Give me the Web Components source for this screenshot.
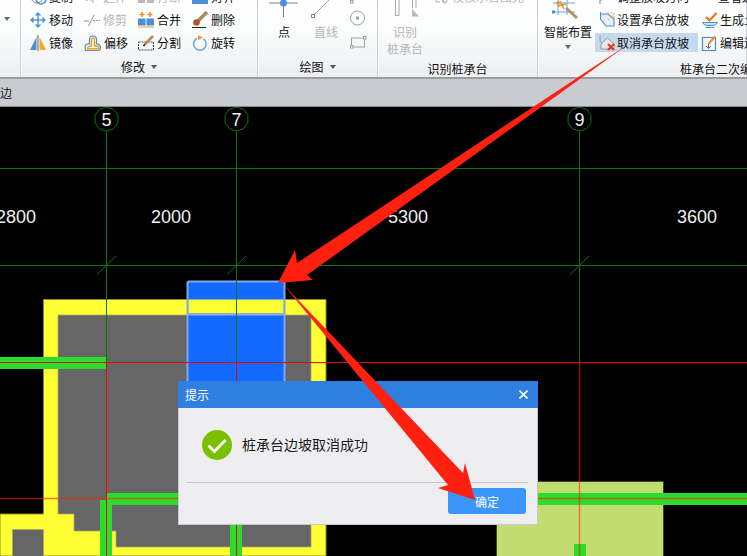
<!DOCTYPE html>
<html lang="zh-CN">
<head>
<meta charset="utf-8">
<title>桩承台</title>
<style>
html,body{margin:0;padding:0;background:#000}
body{font:12px "Noto Sans CJK SC","Liberation Sans",sans-serif;color:#111}
svg{display:block;overflow:visible}
</style>
</head>
<body>
<cad-app>
  <cad-ribbon>
    <cad-group style="width:21px">
      <div style="display:flex;justify-content:flex-start;padding:32px 0 0 4px"><cad-caret></cad-caret></div>
    </cad-group>

    <cad-group caret label="修改" style="width:237px">
      <cad-grid style="--cols:54px 54px 54px 54px;padding-left:9px">
        <cad-item><svg slot="icon" width="16" height="16" viewBox="0 0 16 16"><circle cx="11" cy="10" r="5" fill="none" stroke="#4a8fd6" stroke-width="1.5"/><circle cx="7" cy="8" r="6" fill="none" stroke="#7c8a99"/></svg>复制</cad-item>
        <cad-item disabled><svg slot="icon" width="16" height="16" viewBox="0 0 16 16"><path d="M9 0v14M1 11h3M6 11h3" stroke="#aaa" fill="none"/></svg>延伸</cad-item>
        <cad-item disabled><svg slot="icon" width="16" height="16" viewBox="0 0 16 16"><rect x="0" y="2" width="7" height="12" fill="#bbb"/><rect x="9" y="2" width="7" height="12" fill="#bbb"/></svg>打断</cad-item>
        <cad-item><svg slot="icon" width="16" height="16" viewBox="0 0 16 16"><rect x="0" y="2" width="16" height="13" fill="#4a8fd6"/></svg>对齐</cad-item>

        <cad-item><svg slot="icon" width="16" height="16" viewBox="0 0 16 16" fill="#3f8fdc"><path d="M8 0 4.8 3.6h6.4zM8 16l-3.2-3.600h6.400zM0 8l3.600-3.200v6.400zM16 8l-3.600-3.200v6.400z"/><circle cx="8" cy="8" r="1.700"/><path d="M7 3h2v3H7zM7 10h2v3H7zM3 7h3v2H3zM10 7h3v2h-3z" fill="#7fb4e8"/></svg>移动</cad-item>
        <cad-item disabled><svg slot="icon" width="16" height="16" viewBox="0 0 16 16"><path d="M0 9h5M4.500 14 10 3M9 8.500h2M12 8.500h1.500M15 8.500h1" stroke="#8a8a8a" fill="none"/></svg>修剪</cad-item>
        <cad-item><svg slot="icon" width="16" height="16" viewBox="0 0 16 16"><path d="M4 0v5M1.500 2.500h5M12 0v5M9.500 2.500h5" stroke="#e8901c" stroke-width="1.500"/><rect x="0" y="6.500" width="7.500" height="7" fill="#4a8fd6"/><rect x="8.500" y="6.500" width="7.500" height="7" fill="#4a8fd6"/><path d="M0 15h16" stroke="#e8a040"/></svg>合并</cad-item>
        <cad-item><svg slot="icon" width="16" height="16" viewBox="0 0 16 16"><path d="M15 0 6 9" stroke="#a58a5e" stroke-width="3.400"/><circle cx="4.500" cy="10.500" r="3.300" fill="#b3542a"/><path d="M0 15.500h14" stroke="#222"/></svg>删除</cad-item>

        <cad-item><svg slot="icon" width="16" height="16" viewBox="0 0 16 16"><path d="M0 15 6.500 2v13z" fill="#4a8fd6"/><path d="M8 0v16" stroke="#666"/><path d="M9.500 2 16 15H9.500z" fill="#f6ab1e"/></svg>镜像</cad-item>
        <cad-item><svg slot="icon" width="17" height="16" viewBox="0 0 17 16" fill="none"><path d="M1.500 15.500Q-.5 8.500 5.500 9V4.500Q5.500 1 9 1 12.500 1 12.500 4.500V9H14Q16.500 9.500 16.500 12.500 16.500 15.500 14 15.500Z" stroke="#4a8fd6" stroke-width="1.200"/><path d="M3.500 13.800Q3 11 7.500 11V5Q7.500 3 9 3 10.500 3 10.500 5V11H13.500Q15 11.500 14.800 13.800Z" stroke="#f0a020" stroke-width="1.400"/></svg>偏移</cad-item>
        <cad-item><svg slot="icon" width="16" height="16" viewBox="0 0 16 16" fill="none"><path d="M.5 7h15v8H.5z" stroke="#2c3e60" stroke-dasharray="2 1"/><path d="M15 1 7 9" stroke="#c08a50" stroke-width="2.600"/><path d="M7 9 5.500 11" stroke="#222" stroke-width="1.500"/></svg>分割</cad-item>
        <cad-item><svg slot="icon" width="16" height="16" viewBox="0 0 16 16" fill="none"><path d="M5 3.300A6.300 6.300 0 1 0 11.500 3.800" stroke="#6fa4e2" stroke-width="1.600"/><path d="M6 0 11 2.500 6 5z" fill="#f09a20"/></svg>旋转</cad-item>
      </cad-grid>
    </cad-group>

    <cad-group caret label="绘图" style="width:120px">
      <div style="display:flex;padding-left:11px">
        <cad-big style="--w:30px"><svg slot="icon" width="30" height="38" viewBox="269 -15 30 38"><path d="M269 3h29M283.500 -15v32" stroke="#808080" fill="none"/><circle cx="283.500" cy="3" r="3.500" fill="#4a8fe2"/></svg>点</cad-big>
        <cad-big disabled style="--w:36px;margin-left:9px"><svg slot="icon" width="36" height="38" viewBox="308 -15 36 38"><path d="M314 15 331 -2" stroke="#a8a8a8" fill="none"/><rect x="311.500" y="14.500" width="3" height="3" fill="#fff" stroke="#888"/></svg>直线</cad-big>
        <svg width="16" height="72" viewBox="350 -15 16 72" style="margin-left:6px" fill="none" stroke="#a0a0a0"><rect x="350.500" y="0.500" width="2.500" height="2.500"/><circle cx="357.500" cy="18" r="7"/><rect x="356.500" y="17" width="2" height="2"/><rect x="351.500" y="38" width="13" height="9"/><rect x="350.500" y="45.500" width="2.500" height="2.500" fill="#fff"/><rect x="363.500" y="36.500" width="2.500" height="2.500" fill="#fff"/></svg>
      </div>
    </cad-group>

    <cad-group low label="识别桩承台" style="width:160px">
      <div style="display:flex;padding-left:9px">
        <cad-big disabled style="--w:36px"><svg slot="icon" width="36" height="38" viewBox="387 -15 36 38" fill="none" stroke="#a8a8a8"><path d="M395.500 -15V15.500H399V-15M412.500 -15V8M416 -15V8"/><path d="M412 9 419 16.500 412 16.500z" fill="#b8b8b8" stroke="none"/></svg>识别<br>桩承台</cad-big>
        <div style="margin-left:12px">
          <cad-item disabled style="--gap:3px"><svg slot="icon" width="14" height="16" viewBox="0 0 14 16" fill="none" stroke="#b0b0b0"><path d="M1 2v11h4M7 2v10l4 1.500"/><circle cx="10" cy="12" r="2"/></svg>校核承台图元</cad-item>
        </div>
      </div>
    </cad-group>

    <cad-group low label="桩承台二次编辑" start style="width:209px;--label-pad:142px">
      <div style="display:flex;padding-left:6px">
        <cad-big style="--w:48px"><svg slot="icon" width="48" height="38" viewBox="544 -15 48 38" fill="none"><path d="M553 3h22M553 12h22M558 -3v18M567 -3v18" stroke="#6aa6e4"/><path d="M566 8 577 18" stroke="#b8925e" stroke-width="3"/><path d="M560 1 564 9M558 6l8 -2" stroke="#ee8a20" stroke-width="1.400"/><rect x="552" y="10.500" width="3" height="3" fill="#4a8fd6"/><rect x="556.500" y="1.500" width="3" height="3" fill="#ee8a20"/></svg>智能布置<cad-caret style="margin:5px auto 0"></cad-caret></cad-big>
        <cad-grid style="--cols:103px 60px;margin-left:3px;--gap:2px;--pad:4px">
          <cad-item><svg slot="icon" width="16" height="16" viewBox="0 0 16 16" fill="none"><path d="M1 3v12" stroke="#4a8fd6"/><path d="M1 11 11 8" stroke="#e8901c" stroke-width="1.500"/></svg>调整放坡方向</cad-item>
          <cad-item><svg slot="icon" width="14" height="16" viewBox="0 0 14 16" fill="none"><path d="M5 2v7h6" stroke="#4a8fd6" stroke-width="1.500"/><path d="M8 2 12 8" stroke="#e8901c" stroke-width="2"/></svg>查看边坡</cad-item>

          <cad-item><svg slot="icon" width="16" height="16" viewBox="0 0 16 16" fill="none"><path d="M1.500 0v7L7 14h8V7L9 2H1.500" fill="#e6f0fa" stroke="#4a8fd6" stroke-width="1.100"/><path d="M8 1h7v7" stroke="#f0a040" stroke-dasharray="2 1.300"/><path d="M9 8 15 2" stroke="#f0a040" stroke-dasharray="1.500 1.500"/></svg>设置承台放坡</cad-item>
          <cad-item><svg slot="icon" width="16" height="16" viewBox="0 0 16 16" fill="none"><path d="M4 5 7.500 8.500 14.500 1" stroke="#e8761a" stroke-width="2.200"/><path d="M.5 10.500H15.500Q14 13.500 11 13.500H5Q2 13.500 .5 10.500Z" fill="#cfe3f7" stroke="#4a8fd6"/><path d="M3.500 15.500H12.500" stroke="#4a8fd6"/></svg>生成土方</cad-item>

          <cad-item active><svg slot="icon" width="16" height="16" viewBox="0 0 16 16" fill="none"><path d="M1 0v6L6 12" stroke="#7aa8d8"/><path d="M2 9 8.500 3 15 9v5H2z" fill="#e8e8e8" stroke="#9a9a9a"/><path d="M9 9l6 6M15 9l-6 6" stroke="#e6322a" stroke-width="2"/></svg>取消承台放坡</cad-item>
          <cad-item><svg slot="icon" width="16" height="16" viewBox="0 0 16 16" fill="none"><rect x=".5" y="2.500" width="13" height="13" stroke="#4a8fd6" stroke-width="1.200"/><path d="M6.500 9 13 1.500" stroke="#e8901c" stroke-width="2"/><path d="M6.500 9v4M4 11l2.500 2.500L9 11" stroke="#666"/></svg>编辑边坡</cad-item>
        </cad-grid>
      </div>
    </cad-group>
  </cad-ribbon>
  <cad-tabs>边</cad-tabs>
  <cad-canvas></cad-canvas>
  <cad-dialog heading="提示">桩承台边坡取消成功<span slot="ok">确定</span></cad-dialog>
  <cad-arrows></cad-arrows>
</cad-app>

<script>
function def(name, css, html, extra){
  customElements.define(name, class extends HTMLElement{
    constructor(){super();const r=this.attachShadow({mode:'open'});
      r.innerHTML='<style>'+css+'</style>'+html;}
    connectedCallback(){ if(extra) extra(this, this.shadowRoot); }
  });
}
const FONT='"Noto Sans CJK SC","Liberation Sans",sans-serif';

def('cad-app',
 ':host{display:flex;flex-direction:column;position:relative;width:747px;height:556px;overflow:hidden;font:12px '+FONT+'}',
 '<slot></slot>');

def('cad-ribbon',
 ':host{display:flex;flex:none;height:79px;box-sizing:border-box;overflow:hidden;background:linear-gradient(#fff 0,#fbfcfc 30px,#eceff1 76px);border-bottom:2px solid #9a9da0}',
 '<slot></slot>');

def('cad-group',
 `:host{display:grid;grid-template-rows:57px 19px;flex:none;box-sizing:border-box;height:77px;border-right:1px solid #ced1d4;box-shadow:1px 0 0 #fff;margin-right:0}
  .body{margin-top:-15px;height:72px;min-width:0}
  .label{display:flex;align-items:center;justify-content:center;gap:6px;line-height:19px;color:#111;white-space:nowrap}
  :host([low]) .label{padding-top:3px;box-sizing:border-box}
  :host([start]) .label{justify-content:flex-start;padding-left:var(--label-pad,0)}
  .c{width:0;height:0;border:3.5px solid transparent;border-top:4px solid #555;border-bottom:0;display:none}
  :host([caret]) .c{display:block}`,
 '<div class="body"><slot></slot></div><div class="label"><span id="t"></span><i class="c"></i></div>',
 (h,r)=>{r.getElementById('t').textContent=h.getAttribute('label')||'';});

def('cad-grid',
 ':host{display:grid;grid-template-columns:var(--cols);grid-auto-rows:23px}',
 '<slot></slot>');

def('cad-item',
 `:host{display:flex;align-items:center;height:23px;white-space:nowrap;box-sizing:border-box;padding:0 var(--pad,0);line-height:17px}
  .w{display:flex;align-items:center;gap:var(--gap,3px);height:19px;width:100%;padding:0 var(--pad,0);margin:0 calc(var(--pad,0px) * -1)}
  :host([disabled]){color:#b6b6b6}
  :host([active]) .w{background:#c6d8ee}
  ::slotted(svg){flex:none}`,
 '<div class="w"><slot name="icon"></slot><span><slot></slot></span></div>');

def('cad-big',
 `:host{display:block;flex:none;width:var(--w);text-align:center;line-height:17px;white-space:nowrap}
  :host([disabled]){color:#b6b6b6}
  .i{height:38px}`,
 '<div class="i"><slot name="icon"></slot></div><slot></slot>');

def('cad-caret',
 ':host{display:block;width:0;height:0;border:3.5px solid transparent;border-top:4px solid #666;border-bottom:0}',
 '');

def('cad-tabs',
 ':host{display:flex;align-items:center;flex:none;height:28px;box-sizing:border-box;background:#c8cbcf;border-bottom:1px solid #85888c;color:#222;font-size:12px;overflow:hidden}',
 '<slot></slot>');

def('cad-canvas',
 `:host{display:block;flex:1;background:#000}
  svg{display:block}
  text{font:18px "Liberation Sans",sans-serif;fill:#f0f0f0;text-anchor:middle}`,
 '<svg id="s" width="747" height="449" viewBox="0 107 747 449"></svg>',
 (h,r)=>{
  const G='#0a780a';
  const axes=[[106.5,'5'],[236.5,'7'],[579.5,'9']];
  let o='';
  // slab
  o+='<path d="M43.500 299.500H326V556H0V514H43.500Z" fill="#ffff33" stroke="#8a8a30" stroke-width="1"/>';
  o+='<path d="M58 315H311V547H116V531H74V514H58Z" fill="#666" stroke="#a8a860" stroke-width=".8"/>';
  o+='<rect x="12.500" y="529.500" width="31" height="30" fill="#666" stroke="#a8a860" stroke-width=".8"/>';
  // selected wall
  o+='<rect x="187.500" y="281.500" width="97" height="150" rx="1.500" fill="#1469ff" stroke="#7fa7ee" stroke-width="2"/>';
  o+='<rect x="188.500" y="299.500" width="95" height="14" fill="#ffff33"/>';
  o+='<path d="M187 314.500H285" stroke="#8fb0e8" stroke-width="2"/>';
  // pale footing
  o+='<rect x="496.500" y="481.500" width="167" height="80" fill="#c3dc72" stroke="#3f4a1c"/>';
  // grid
  o+=`<path d="M0 168.500H747M0 265.500H747" stroke="${G}" fill="none"/>`;
  for(const [x,l] of axes){
    o+=`<path d="M${x} 131V362" stroke="${G}" fill="none"/>`;
    o+=`<path d="M${x-9.5} 274.500L${x+9.5} 256" stroke="${G}" fill="none"/>`;
    let p=[];for(let i=0;i<10;i++){const a=Math.PI*2*i/10+Math.PI/10;p.push((x+12*Math.cos(a)).toFixed(1)+','+(119+12*Math.sin(a)).toFixed(1));}
    o+=`<polygon points="${p.join(' ')}" fill="none" stroke="${G}"/>`;
    o+=`<text x="${x}" y="125.500">${l}</text>`;
  }
  for(const [x,l] of [[16,'2800'],[171,'2000'],[408,'5300'],[697,'3600']]) o+=`<text x="${x}" y="223">${l}</text>`;
  // beams
  o+='<g fill="#2cdc2c"><rect x="0" y="357" width="106" height="12"/><rect x="107" y="493" width="640" height="12"/><rect x="100" y="500" width="12" height="56"/><rect x="230" y="505" width="12" height="51"/><rect x="574" y="544" width="12" height="12"/></g>';
  // red centre lines
  o+='<path d="M0 362.500H747" stroke="#e00808"/>';
  o+='<path d="M106.500 362V556" stroke="#f00"/>';
  o+='<path d="M236.500 362V556" stroke="#e00808"/>';
  o+='<path d="M0 498.500H747" stroke="#ff2000" stroke-opacity=".6" stroke-width="1.500"/>';
  o+='<path d="M579.500 362V556" stroke="#ff2000" stroke-opacity=".55" stroke-width="1.500"/>';
  r.getElementById('s').innerHTML=o;
 });

def('cad-dialog',
 `:host{position:absolute;left:178px;top:381px;width:360px;height:144px;box-sizing:border-box;display:flex;flex-direction:column;background:#eeeef0;border:1px solid #c3c8d2;border-top:0;color:#222}
  .bar{display:flex;align-items:center;justify-content:space-between;height:27px;flex:none;margin:0 -1px;padding:0 10px 0 7px;background:#2e7fe0;color:#fff;font-size:12px}
  .msg{display:flex;align-items:center;gap:10px;height:30px;margin:22px 0 0 23px;font-size:14px;color:#1a1a1a}
  .msg span{padding-bottom:3px}
  hr{border:0;border-top:1px solid #c4c4c6;margin:22px 9px 0 8px;height:0}
  .foot{display:flex;justify-content:flex-end;padding:6px 11px 0 0}
  .ok{width:78px;height:26px;border-radius:3px;background:#3b96fb;color:#fff;display:flex;align-items:center;justify-content:center;font-size:12px}`,
 `<div class="bar"><span id="h"></span><svg width="9" height="9" viewBox="0 0 9 9"><path d="M.5 .5l8 8M8.500 .5l-8 8" stroke="#fff" stroke-width="1.600"/></svg></div>
  <div class="msg"><svg width="30" height="30" viewBox="0 0 30 30"><circle cx="15" cy="15" r="15" fill="#78c000"/><path d="M6.500 15.500 12.500 21.500 23.500 10" fill="none" stroke="#fff" stroke-width="2.800"/></svg><span><slot></slot></span></div>
  <hr>
  <div class="foot"><div class="ok" style="margin-top:-1px"><slot name="ok"></slot></div></div>`,
 (h,r)=>{r.getElementById('h').textContent=h.getAttribute('heading');});

def('cad-arrows',
 ':host{position:absolute;left:0;top:0;width:747px;height:556px;pointer-events:none}',
 `<svg width="747" height="556" viewBox="0 0 747 556">
    <polygon points="630,43 297,263 295,250 278,283 313,280 307,275" fill="#ff2010"/>
    <polygon points="283,284 463,473 465,463 475,500 438,488 448,485" fill="#ff2010"/>
  </svg>`);
</script>
</body>
</html>
